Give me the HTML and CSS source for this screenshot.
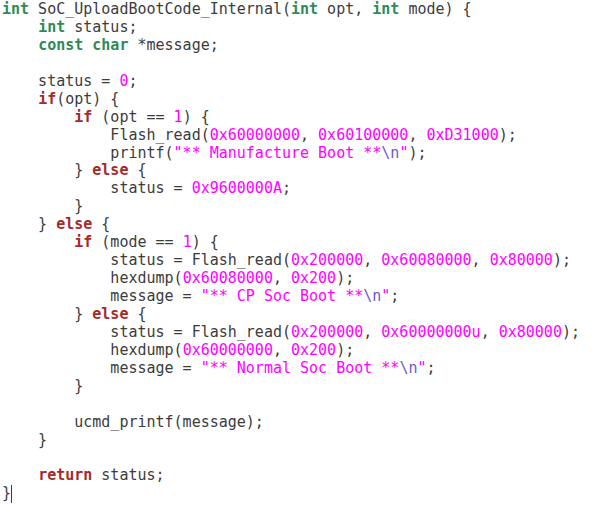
FILE: index.html
```html
<!DOCTYPE html>
<html>
<head>
<meta charset="utf-8">
<link rel="stylesheet" href="styles.css">
</head>
<body>
<pre class="code"><span class="t">int</span> SoC_UploadBootCode_Internal(<span class="t">int</span> opt, <span class="t">int</span> mode) {
    <span class="t">int</span> status;
    <span class="t">const</span> <span class="t">char</span> *message;

    status = <span class="n">0</span>;
    <span class="k">if</span>(opt) {
        <span class="k">if</span> (opt == <span class="n">1</span>) {
            Flash_read(<span class="n">0x60000000</span>, <span class="n">0x60100000</span>, <span class="n">0xD31000</span>);
            printf(<span class="n">"** Manufacture Boot **<span class="e">\n</span>"</span>);
        } <span class="k">else</span> {
            status = <span class="n">0x9600000A</span>;
        }
    } <span class="k">else</span> {
        <span class="k">if</span> (mode == <span class="n">1</span>) {
            status = Flash_read(<span class="n">0x200000</span>, <span class="n">0x60080000</span>, <span class="n">0x80000</span>);
            hexdump(<span class="n">0x60080000</span>, <span class="n">0x200</span>);
            message = <span class="n">"** CP Soc Boot **<span class="e">\n</span>"</span>;
        } <span class="k">else</span> {
            status = Flash_read(<span class="n">0x200000</span>, <span class="n">0x60000000u</span>, <span class="n">0x80000</span>);
            hexdump(<span class="n">0x60000000</span>, <span class="n">0x200</span>);
            message = <span class="n">"** Normal Soc Boot **<span class="e">\n</span>"</span>;
        }

        ucmd_printf(message);
    }

    <span class="k">return</span> status;
}<span class="cursor"></span></pre>
</body>
</html>
```
FILE: styles.css
```css
html, body {
  margin: 0;
  padding: 0;
  background: #ffffff;
}
.code {
  margin: 0;
  padding: 1px 0 0 2px;
  font-family: "DejaVu Sans Mono", monospace;
  font-size: 15px;
  line-height: 17.93px;
  color: #3c3c3c;
}
.t {
  color: #2e8b57;
  font-weight: bold;
}
.k {
  color: #a52a2a;
  font-weight: bold;
}
.n {
  color: #ff00ff;
}
.e {
  color: #6a5acd;
}
.cursor {
  display: inline-block;
  width: 0;
  height: 18px;
  border-left: 1px solid #3c3c3c;
  vertical-align: top;
}
```
